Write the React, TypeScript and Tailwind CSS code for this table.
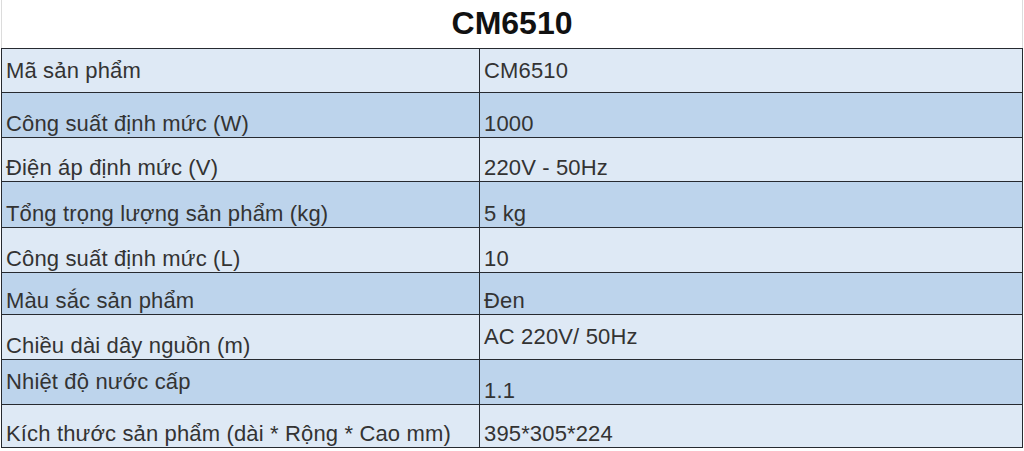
import React from "react";

type Align = "top" | "middle" | "bottom";

interface Row {
  label: string;
  value: string;
  h: number;
  dark: boolean;
  la: Align;
  va: Align;
}

const rows: Row[] = [
  { label: "Mã sản phẩm", value: "CM6510", h: 44, dark: false, la: "middle", va: "middle" },
  { label: "Công suất định mức (W)", value: "1000", h: 45, dark: true, la: "bottom", va: "bottom" },
  { label: "Điện áp định mức (V)", value: "220V - 50Hz", h: 44, dark: false, la: "bottom", va: "bottom" },
  { label: "Tổng trọng lượng sản phẩm (kg)", value: "5 kg", h: 46, dark: true, la: "bottom", va: "bottom" },
  { label: "Công suất định mức (L)", value: "10", h: 45, dark: false, la: "bottom", va: "bottom" },
  { label: "Màu sắc sản phẩm", value: "Đen", h: 42, dark: true, la: "bottom", va: "bottom" },
  { label: "Chiều dài dây nguồn (m)", value: "AC 220V/ 50Hz", h: 45, dark: false, la: "bottom", va: "middle" },
  { label: "Nhiệt độ nước cấp", value: "1.1", h: 45, dark: true, la: "top", va: "bottom" },
  { label: "Kích thước sản phẩm (dài * Rộng * Cao mm)", value: "395*305*224", h: 43, dark: false, la: "bottom", va: "bottom" },
];

const alignClass: Record<Align, string> = {
  top: "align-top pt-[9px]",
  middle: "align-middle",
  bottom: "align-bottom pb-[1px]",
};

export default function App() {
  return (
    <div
      className="w-[1024px] h-[451px] bg-white overflow-hidden"
      style={{ fontFamily: '"Liberation Sans", Arial, sans-serif' }}
    >
      <div className="ml-px w-[1022px]">
        {/* Title */}
        <div className="h-[48px] border-x border-[#dcdcdc] flex items-center justify-center">
          <h1 className="text-[32px] font-bold text-[#111] leading-none -mt-[2px]">CM6510</h1>
        </div>

        {/* Spec table */}
        <table className="w-full border-collapse table-fixed">
          <colgroup>
            <col className="w-[478px]" />
            <col />
          </colgroup>
          <tbody>
            {rows.map((r) => (
              <tr
                key={r.label}
                className={r.dark ? "bg-[#bdd4ec]" : "bg-[#dee9f5]"}
                style={{ height: r.h }}
              >
                <td
                  className={`border border-[#262a30] px-[4px] text-[22px] leading-[1.15] tracking-[0.15px] text-[#333] whitespace-nowrap ${alignClass[r.la]}`}
                >
                  {r.label}
                </td>
                <td
                  className={`border border-[#262a30] px-[4px] text-[22px] leading-[1.15] tracking-[0.15px] text-[#333] whitespace-nowrap ${alignClass[r.va]}`}
                >
                  {r.value}
                </td>
              </tr>
            ))}
          </tbody>
        </table>
      </div>
    </div>
  );
}
